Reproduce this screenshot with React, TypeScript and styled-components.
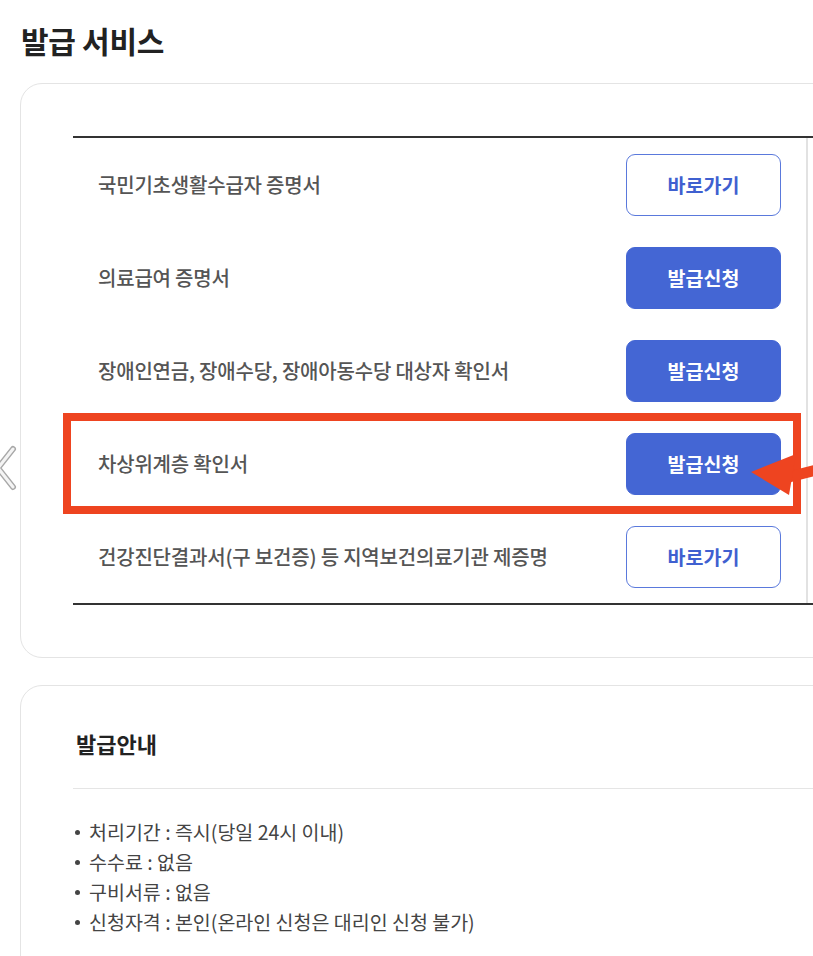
import React from "react";
import styled, { createGlobalStyle } from "styled-components";

const GlobalStyle = createGlobalStyle`
  html, body { margin: 0; padding: 0; background: #fff; overflow: hidden; }
  body { font-family: "Noto Sans CJK KR", "Noto Sans", sans-serif; color: #222; }
  * { box-sizing: border-box; }
`;

const Page = styled.div`
  position: relative;
  width: 900px;
  padding: 18px 0 40px 20px;
`;

const Title = styled.h2`
  margin: 0 0 21px 1px;
  font-size: 30px;
  font-weight: 700;
  line-height: 44px;
  color: #222;
  letter-spacing: -0.3px;
`;

const Card = styled.section`
  width: 880px;
  border: 1px solid #e4e4e4;
  border-radius: 22px;
  background: #fff;
  padding: ${(p: { $pad: string }) => p.$pad};
`;

const Table = styled.div`
  border-top: 2px solid #333;
  border-bottom: 2px solid #333;
  display: flex;
  flex-direction: column;
`;

const Row = styled.div`
  position: relative;
  display: flex;
  height: 93px;
`;

const TitleCell = styled.div`
  width: 495px;
  padding-left: 25px;
  display: flex;
  align-items: center;
  font-size: 20px;
  font-weight: 500;
  color: #555;
  letter-spacing: -0.2px;
  white-space: nowrap;
`;

const ActionCell = styled.div`
  width: 240px;
  padding-right: 25px;
  display: flex;
  align-items: center;
  justify-content: flex-end;
  border-right: 2px solid #e2e2e2;
`;

const ExtraCell = styled.div`
  width: 60px;
`;

const Button = styled.button<{ $filled?: boolean }>`
  width: 155px;
  height: 62px;
  border-radius: 9px;
  border: 1px solid ${(p) => (p.$filled ? "#4466d4" : "#5a79dc")};
  background: ${(p) => (p.$filled ? "#4466d4" : "#fff")};
  color: ${(p) => (p.$filled ? "#fff" : "#3f60d0")};
  font-family: "Noto Sans CJK KR", sans-serif;
  font-size: 19.5px;
  font-weight: 700;
  padding: 0;
  cursor: pointer;
`;

const Highlight = styled.div`
  position: absolute;
  left: -10px;
  top: -4px;
  width: 738px;
  height: 101px;
  border: 8px solid #ee4420;
  pointer-events: none;
`;

const Arrow = styled.svg`
  position: absolute;
  left: 672px;
  top: 23px;
  width: 90px;
  height: 60px;
  overflow: visible;
  pointer-events: none;
`;

const Chevron = styled.svg`
  position: absolute;
  left: 0;
  top: 440px;
  width: 16px;
  height: 56px;
  overflow: visible;
`;

const InfoHeading = styled.h3`
  margin: 0;
  padding-left: 3px;
  font-size: 22px;
  font-weight: 700;
  line-height: 30px;
  color: #222;
`;

const Divider = styled.hr`
  margin: 30px 0 0;
  border: 0;
  border-top: 1px solid #e5e5e5;
`;

const InfoList = styled.ul`
  list-style: none;
  margin: 28px 0 0;
  padding: 0 0 0 1px;
`;

const InfoItem = styled.li`
  position: relative;
  padding-left: 15px;
  font-size: 19.5px;
  line-height: 30px;
  color: #444;
  white-space: nowrap;
  &::before {
    content: "";
    position: absolute;
    left: 1px;
    top: 13px;
    width: 5px;
    height: 5px;
    border-radius: 50%;
    background: #444;
  }
`;

const Gap = styled.div`
  height: 27px;
`;

type Item = { label: string; filled: boolean; highlight?: boolean };

const items: Item[] = [
  { label: "국민기초생활수급자 증명서", filled: false },
  { label: "의료급여 증명서", filled: true },
  { label: "장애인연금, 장애수당, 장애아동수당 대상자 확인서", filled: true },
  { label: "차상위계층 확인서", filled: true, highlight: true },
  { label: "건강진단결과서(구 보건증) 등 지역보건의료기관 제증명", filled: false },
];

const info = [
  "처리기간 : 즉시(당일 24시 이내)",
  "수수료 : 없음",
  "구비서류 : 없음",
  "신청자격 : 본인(온라인 신청은 대리인 신청 불가)",
];

export default function App() {
  return (
    <>
      <GlobalStyle />
      <Page>
        <Title>발급 서비스</Title>
        <Card $pad="52px 0 52px 52px">
          <Table>
            {items.map((it) => (
              <Row key={it.label}>
                <TitleCell>{it.label}</TitleCell>
                <ActionCell>
                  <Button $filled={it.filled}>{it.filled ? "발급신청" : "바로가기"}</Button>
                </ActionCell>
                <ExtraCell />
                {it.highlight && (
                  <>
                    <Highlight />
                    <Arrow viewBox="0 0 90 60">
                      <line x1="40" y1="38" x2="95" y2="24" stroke="#ee4420" strokeWidth="11" />
                      <polygon points="6,32 51,14 44,55" fill="#ee4420" />
                    </Arrow>
                  </>
                )}
              </Row>
            ))}
          </Table>
        </Card>
        <Gap />
        <Card $pad="42px 0 60px 52px">
          <InfoHeading>발급안내</InfoHeading>
          <Divider />
          <InfoList>
            {info.map((t) => (
              <InfoItem key={t}>{t}</InfoItem>
            ))}
          </InfoList>
        </Card>
        <Chevron viewBox="0 0 16 56">
          <polyline points="13,9 -2,28 13,47" fill="none" stroke="#a8a8a8" strokeWidth="6" strokeLinecap="round" strokeLinejoin="round" />
          <polyline points="13,9 -2,28 13,47" fill="none" stroke="#f4f4f4" strokeWidth="3" strokeLinecap="round" strokeLinejoin="round" />
        </Chevron>
      </Page>
    </>
  );
}
